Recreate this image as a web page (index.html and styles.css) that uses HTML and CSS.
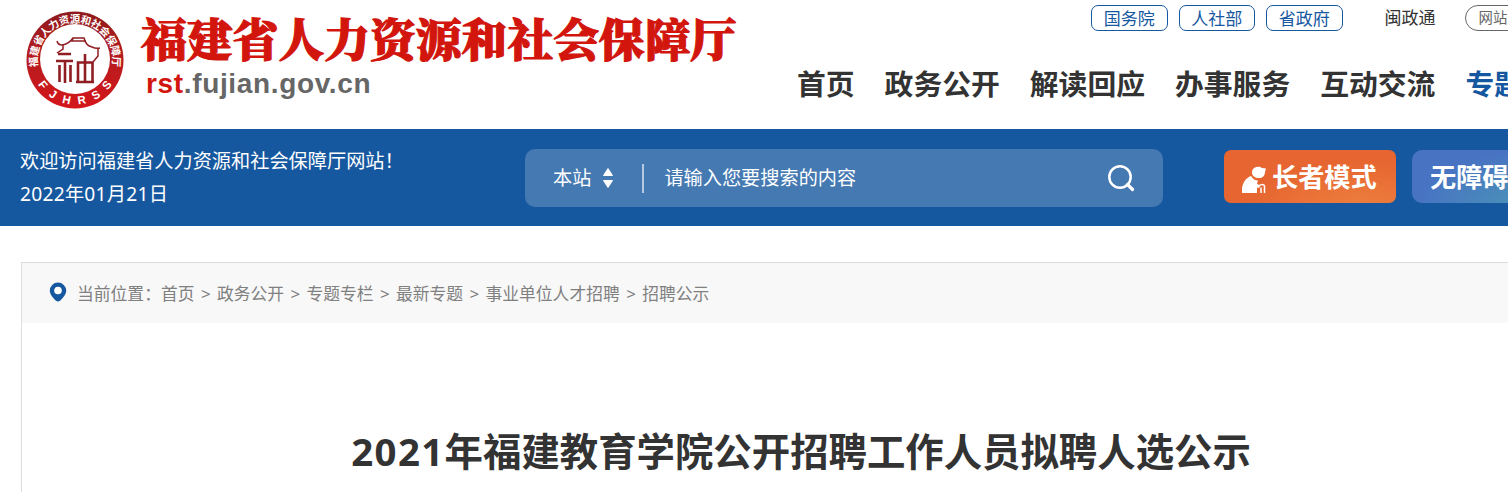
FILE: index.html
```html
<!DOCTYPE html>
<html lang="zh-CN">
<head>
    <meta charset="UTF-8">
    <meta name="viewport" content="width=device-width, initial-scale=1.0">
    <title>2021年福建教育学院公开招聘工作人员拟聘人选公示</title>
    <link rel="stylesheet" href="styles.css">
</head>
<body>
    <header class="header">
        <a class="logo" href="#">
            <svg class="emblem" viewBox="0 0 100 100" width="100" height="100">
                <defs>
                    <linearGradient id="ring" x1="0" y1="0" x2="0" y2="1">
                        <stop offset="0" stop-color="#8d1a1d"/>
                        <stop offset="0.45" stop-color="#b51c1f"/>
                        <stop offset="1" stop-color="#d4161a"/>
                    </linearGradient>
                    <path id="arcTop" d="M13.2 58 A37.6 37.6 0 1 1 86.800 58"/>
                    <path id="arcBottom" d="M5.500 50 A44.500 44.500 0 0 0 94.500 50"/>
                </defs>
                <circle cx="50" cy="50" r="48.5" fill="url(#ring)"/>
                <circle cx="50" cy="49" r="35" fill="#fff"/>
                <text class="ring-cn"><textPath href="#arcTop" startOffset="50%" textLength="131">福建省人力资源和社会保障厅</textPath></text>
                <text class="ring-en"><textPath href="#arcBottom" startOffset="50%" textLength="88">FJHRSS</textPath></text>
                <!-- roof -->
                <g fill="none" stroke="#8f1d22" stroke-width="1.500">
                    <path d="M32 31q1 4 5 4 7-1 11-7h11q2 8 8 9 4 2 8 1"/>
                    <path d="M38 35v4l-6 4M48 28l-1 3h14M73 39v7l-5 6"/>
                </g>
                <g fill="none" stroke="#8f1d22" stroke-width="2.600">
                    <path d="M33 44h13M31 51h17M34.500 55v17M40 51v22M45.500 55v17"/>
                    <path d="M53 73V52.500h14.500V73M60 44v28M51 72h18"/>
                </g>
            </svg>
            <span class="logo-text">
                <span class="logo-name">福建省人力资源和社会保障厅</span>
                <span class="logo-url"><b>rst</b>.fujian.gov.cn</span>
            </span>
        </a>
        <div class="header-right">
            <div class="top-links">
                <a class="tag" href="#">国务院</a>
                <a class="tag" href="#">人社部</a>
                <a class="tag" href="#">省政府</a>
                <a class="plain" href="#">闽政通</a>
                <a class="pill" href="#">网站支持IPv6</a>
            </div>
            <nav class="nav">
                <a href="#">首页</a>
                <a href="#">政务公开</a>
                <a href="#">解读回应</a>
                <a href="#">办事服务</a>
                <a href="#">互动交流</a>
                <a class="active" href="#">专题专栏</a>
            </nav>
        </div>
    </header>

    <div class="banner">
        <div class="welcome">
            <p>欢迎访问福建省人力资源和社会保障厅网站！</p>
            <p class="date">2022年01月21日</p>
        </div>
        <div class="search">
            <span class="scope">本站</span>
            <svg class="sort" viewBox="0 0 12 22" width="12" height="22">
                <path d="M6 1.500l4.500 7h-9zM6 20.500l-4.500-7h9z" fill="#fff" stroke="#fff" stroke-linejoin="round"/>
            </svg>
            <span class="divider"></span>
            <span class="placeholder">请输入您要搜索的内容</span>
            <svg class="magnifier" viewBox="0 0 28 28" width="28" height="28">
                <circle cx="13" cy="13" r="10.700" fill="none" stroke="#fff" stroke-width="2.500"/>
                <path d="M20.500 20.500l5 5" stroke="#fff" stroke-width="3.200" stroke-linecap="round"/>
            </svg>
        </div>
        <a class="mode elder" href="#">
            <svg viewBox="0 0 24 27" width="24" height="27">
                <path d="M10 5C11 1 17-.5 20 2l4 .500-1 3.500c0 4-3 6.500-6.500 6C12 12 9.500 9 10 5z" fill="#fff"/>
                <path d="M0 27V22c1-6 4-10 9-12 2 3 4 4.500 7 4.500l-1 3 3 2.500-1 2-2-.500v5.500z" fill="#fff"/>
                <path d="M16.500 20q5-3 6 0v7M19 21.500V27" fill="none" stroke="#fff" stroke-width="1.500"/>
            </svg>
            <span>长者模式</span>
        </a>
        <a class="mode barrier" href="#"><span>无障碍浏览</span></a>
    </div>

    <main class="content">
        <div class="crumbs">
            <svg class="pin" viewBox="0 0 18 20" width="18" height="20">
                <path d="M9 .500a8.200 8.200 0 0 1 8.200 8.200C17.200 13 13 16.500 11 18.800q-2 1.400-4 0C5 16.500.800 13 .800 8.700A8.200 8.200 0 0 1 9 .500z" fill="#16589f"/>
                <circle cx="9" cy="8.500" r="3.800" fill="#fff"/>
            </svg>
            <span>当前位置：</span>
            <a href="#">首页</a><i>&gt;</i>
            <a href="#">政务公开</a><i>&gt;</i>
            <a href="#">专题专栏</a><i>&gt;</i>
            <a href="#">最新专题</a><i>&gt;</i>
            <a href="#">事业单位人才招聘</a><i>&gt;</i>
            <a href="#">招聘公示</a>
        </div>
        <h1 class="title"><span>2021</span>年福建教育学院公开招聘工作人员拟聘人选公示</h1>
    </main>
</body>
</html>
```
FILE: styles.css
```css
/* General */
* {
    box-sizing: border-box;
}

body {
    margin: 0;
    height: 492px;
    overflow: hidden;
    background-color: #fff;
    color: #333;
    font-family: "Noto Sans", "Noto Sans CJK SC", sans-serif;
}

a {
    color: inherit;
    text-decoration: none;
    white-space: nowrap;
}

p {
    margin: 0;
}

svg {
    flex: none;
}

/* Header */
.header {
    display: flex;
    height: 129px;
}

.logo {
    display: flex;
    flex: none;
    width: 797px;
    padding: 10px 0 0 25px;
}

.ring-cn {
    fill: #fff;
    font: bold 10.4px "Noto Sans CJK SC", sans-serif;
    text-anchor: middle;
}

.ring-en {
    fill: #fff;
    font: bold 11.5px "Liberation Sans", sans-serif;
    text-anchor: middle;
}

.logo-text {
    display: flex;
    flex-direction: column;
    padding-left: 16px;
}

.logo-name {
    height: 58px;
    color: #d2160e;
    font-family: "Noto Serif CJK SC", "Noto Sans CJK SC", serif;
    font-size: 45.8px;
    font-weight: 900;
    line-height: 55px;
    -webkit-text-stroke: 1.2px #d2160e;
}

.logo-url {
    padding-left: 5px;
    color: #666;
    font-family: "Liberation Sans", sans-serif;
    font-size: 28px;
    font-weight: bold;
    letter-spacing: 0.65px;
    line-height: 32px;
}

.logo-url b {
    color: #d2160e;
}

.header-right {
    flex: none;
}

.top-links {
    display: flex;
    gap: 11px;
    height: 31px;
    padding: 5px 0 0 294px;
    font-size: 17px;
}

.tag {
    width: 76.5px;
    height: 26px;
    border: 1px solid #16589f;
    border-radius: 7px;
    color: #16589f;
    line-height: 25px;
    text-align: center;
}

.plain {
    margin-left: 31px;
    line-height: 26px;
}

.pill {
    height: 26px;
    margin-left: 18px;
    padding: 0 13px;
    border: 1px solid #666;
    border-radius: 13px;
    color: #666;
    font-size: 14.4px;
    line-height: 24px;
}

.nav {
    display: flex;
    gap: 30px;
    padding-top: 33px;
    font-size: 28.8px;
    font-weight: bold;
    line-height: 40px;
}

.nav .active {
    color: #16589f;
}

/* Blue banner */
.banner {
    display: flex;
    height: 97px;
    padding-left: 20px;
    background-color: #16589f;
    color: #fff;
}

.welcome {
    flex: none;
    width: 505px;
    padding-top: 15px;
    font-size: 19.2px;
    line-height: 33px;
}

.date {
    letter-spacing: 0.25px;
}

.search {
    display: flex;
    flex: none;
    align-items: center;
    width: 638px;
    height: 58px;
    margin: 20px 61px 0 0;
    padding: 0 28px;
    border-radius: 10px;
    background-color: #4579b2;
    font-size: 19.2px;
}

.scope,
.placeholder {
    padding-bottom: 2px;
}

.sort {
    margin-left: 11px;
}

.divider {
    width: 2px;
    height: 29px;
    margin: 0 20px 0 28px;
    background-color: #b5c9e0;
}

.magnifier {
    margin-left: auto;
}

.mode {
    display: flex;
    flex: none;
    align-items: center;
    height: 53px;
    margin-top: 21px;
    padding-left: 18px;
    border-radius: 7px;
    font-size: 26.2px;
    font-weight: bold;
}

.mode span {
    padding-bottom: 2px;
}

.elder {
    gap: 6px;
    width: 172px;
    margin-right: 16px;
    background: radial-gradient(ellipse at 80% 115%, #ee8040 0%, #e66530 60%);
}

.elder svg {
    margin-top: 6px;
}

.barrier {
    width: 172px;
    border-radius: 10px;
    background: radial-gradient(ellipse at 75% 110%, #4a98b5 0%, #4873c3 70%);
}

/* Article */
.content {
    width: 1560px;
    height: 230px;
    margin: 36px 0 0 21px;
    border: 1px solid #ddd;
    border-bottom: none;
}

.crumbs {
    display: flex;
    align-items: center;
    height: 60px;
    padding-left: 27px;
    background-color: #f8f8f8;
    color: #808080;
    font-size: 16.8px;
}

.crumbs i {
    width: 22.4px;
    font-style: normal;
    text-align: center;
}

.pin {
    margin: 0 10px 2px 0;
}

.title {
    margin: 100px 0 0;
    font-size: 38.4px;
    line-height: 56px;
    text-align: center;
}

.title span {
    letter-spacing: 1.4px;
}
```
